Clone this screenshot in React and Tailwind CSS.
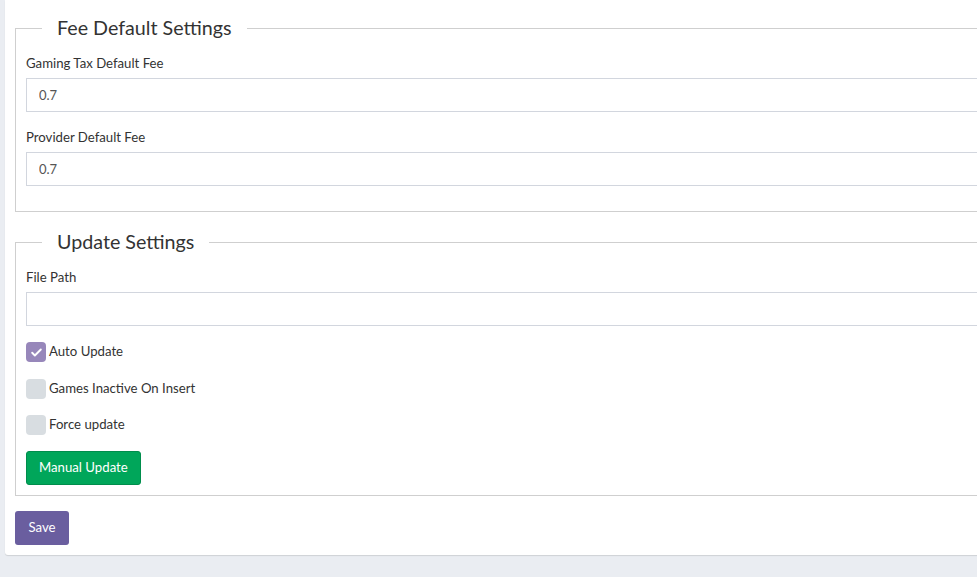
import { useState } from 'react';

const font = { fontFamily: 'Lato, "Noto Sans", sans-serif' };

function Field({ label, value, gap = 'mb-[15px]' }) {
  return (
    <div className={gap}>
      <label className="block h-5 mb-[5px] text-[13.2px] leading-5 text-[#333]">{label}</label>
      <input
        readOnly
        value={value}
        className="block w-full h-[34px] px-3 border border-[#d2d6de] bg-white text-[13px] text-[#555] outline-none"
      />
    </div>
  );
}

function Check({ label, checked, onToggle, gap }) {
  return (
    <div className={`flex items-center h-5 ${gap}`}>
      <button
        type="button"
        onClick={onToggle}
        className={`w-5 h-5 rounded-[4px] flex items-center justify-center ${
          checked ? 'bg-[#9787ba]' : 'bg-[#d8dde1]'
        }`}
      >
        {checked && (
          <svg width="13" height="13" viewBox="0 0 24 24" fill="none" stroke="white" strokeWidth="3.5" strokeLinecap="round" strokeLinejoin="round">
            <path d="M4 12.5l5 5L20 6.5" />
          </svg>
        )}
      </button>
      <span className="ml-[3px] text-[13.2px] text-[#333]">{label}</span>
    </div>
  );
}

function Section({ title, children, className = '' }) {
  return (
    <fieldset className={`border border-[#cfcfcf] px-[10px] pb-[10px] ${className}`}>
      <legend className="ml-4 px-[15px] text-[19.7px] leading-[30px] text-[#333]">{title}</legend>
      <div className="pt-[10px]">{children}</div>
    </fieldset>
  );
}

export default function App() {
  const [checks, setChecks] = useState({ auto: true, inactive: false, force: false });
  const toggle = (k) => setChecks((c) => ({ ...c, [k]: !c[k] }));

  return (
    <div className="w-screen h-screen overflow-hidden bg-[#eaedf2]" style={font}>
      <div className="ml-[5px] w-[1200px] bg-white px-[10px] pt-[13px] pb-[10px] rounded-b-[3px] shadow-[0_1px_1px_rgba(0,0,0,0.12)]">
        <Section title="Fee Default Settings" className="mb-[15px]">
          <Field label="Gaming Tax Default Fee" value="0.7" />
          <Field label="Provider Default Fee" value="0.7" />
        </Section>

        <Section title="Update Settings">
          <Field label="File Path" value="" gap="mb-4" />
          <Check label="Auto Update" checked={checks.auto} onToggle={() => toggle('auto')} gap="mb-[17px]" />
          <Check label="Games Inactive On Insert" checked={checks.inactive} onToggle={() => toggle('inactive')} gap="mb-4" />
          <Check label="Force update" checked={checks.force} onToggle={() => toggle('force')} gap="mb-4" />
          <button type="button" className="h-[34px] px-3 rounded-[3px] bg-[#00a65a] border border-[#008d4c] text-white text-[13.2px]">
            Manual Update
          </button>
        </Section>

        <button type="button" className="mt-[15px] h-[34px] w-[54px] rounded-[3px] bg-[#6a5e9f] text-white text-[13.2px]">
          Save
        </button>
      </div>
    </div>
  );
}
